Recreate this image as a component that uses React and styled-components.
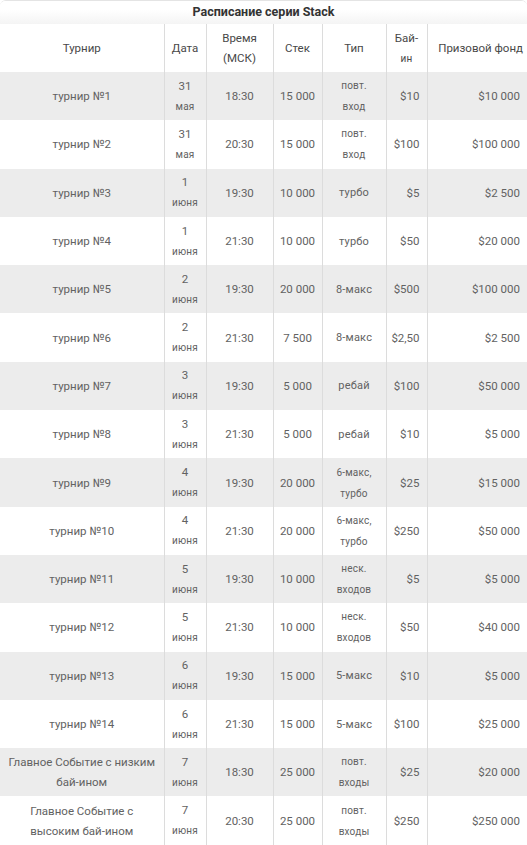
import styled, { createGlobalStyle } from 'styled-components';

const GlobalStyle = createGlobalStyle`
	body {
		margin: 0;
		background: #fff;
		font-family: Roboto, "Liberation Sans", sans-serif;
	}
`;

const COLS = [164, 42, 67, 49, 64, 41, 100];

const ROWS = [
	['турнир №1', '31', 'мая', '18:30', '15 000', ['повт.', 'вход'], '$10', '$10 000'],
	['турнир №2', '31', 'мая', '20:30', '15 000', ['повт.', 'вход'], '$100', '$100 000'],
	['турнир №3', '1', 'июня', '19:30', '10 000', ['турбо'], '$5', '$2 500'],
	['турнир №4', '1', 'июня', '21:30', '10 000', ['турбо'], '$50', '$20 000'],
	['турнир №5', '2', 'июня', '19:30', '20 000', ['8-макс'], '$500', '$100 000'],
	['турнир №6', '2', 'июня', '21:30', '7 500', ['8-макс'], '$2,50', '$2 500'],
	['турнир №7', '3', 'июня', '19:30', '5 000', ['ребай'], '$100', '$50 000'],
	['турнир №8', '3', 'июня', '21:30', '5 000', ['ребай'], '$10', '$5 000'],
	['турнир №9', '4', 'июня', '19:30', '20 000', ['6-макс,', 'турбо'], '$25', '$15 000'],
	['турнир №10', '4', 'июня', '21:30', '20 000', ['6-макс,', 'турбо'], '$250', '$50 000'],
	['турнир №11', '5', 'июня', '19:30', '10 000', ['неск.', 'входов'], '$5', '$5 000'],
	['турнир №12', '5', 'июня', '21:30', '10 000', ['неск.', 'входов'], '$50', '$40 000'],
	['турнир №13', '6', 'июня', '19:30', '15 000', ['5-макс'], '$10', '$5 000'],
	['турнир №14', '6', 'июня', '21:30', '15 000', ['5-макс'], '$100', '$25 000'],
	['Главное Событие с низким бай-ином', '7', 'июня', '18:30', '25 000', ['повт.', 'входы'], '$25', '$20 000'],
	['Главное Событие с высоким бай-ином', '7', 'июня', '20:30', '25 000', ['повт.', 'входы'], '$250', '$250 000'],
];

const Wrapper = styled.div`
	width: 527px;
	overflow: hidden;
	border-radius: 6px 6px 0 0;
	border-top: 1px solid #e4e4e4;
	box-sizing: border-box;
`;

const Title = styled.div`
	height: 23px;
	line-height: 22px;
	text-align: center;
	font-size: 12.5px;
	font-weight: 700;
	color: #333;
	background: linear-gradient(#fff 40%, #f4f4f4);
`;

const Table = styled.table`
	width: 527px;
	table-layout: fixed;
	border-collapse: collapse;
	font-size: 11.5px;
	color: #626262;
`;

const Row = styled.tr`
	height: 48.3px;
	background: ${({ $shaded }) => ($shaded ? '#ececec' : '#fff')};
`;

const HeadRow = styled.tr`
	height: 48px;
	background: #fff;
`;

const Th = styled.th`
	font-weight: 400;
	color: #484848;
	font-size: 11.5px;
	line-height: 20px;
	padding: 0 4px;
	text-align: ${({ $align }) => $align || 'center'};
	border-left: 1px solid #dcdcdc;
	&:first-child {
		border-left: none;
	}
`;

const Td = styled.td`
	line-height: 20px;
	padding: ${({ $align }) => ($align === 'right' ? '0 7px 0 2px' : '0 4px')};
	text-align: ${({ $align }) => $align || 'center'};
	vertical-align: middle;
	border-left: 1px solid #dcdcdc;
	white-space: ${({ $nowrap }) => ($nowrap ? 'nowrap' : 'normal')};
	&:first-child {
		border-left: none;
		padding: 0 7px;
	}
`;

const Small = styled.span`
	font-size: ${({ $size }) => $size || '10px'};
	letter-spacing: 0.2px;
`;

const TypeCell = ({ lines }) =>
	lines.length > 1 ? (
		<>
			<Small>{lines[0]}</Small>
			<br />
			<Small>{lines[1]}</Small>
		</>
	) : (
		<Small $size="11px">{lines[0]}</Small>
	);

export default function App() {
	return (
		<>
			<GlobalStyle />
			<Wrapper>
				<Title>Расписание серии Stack</Title>
				<Table>
					<colgroup>
						{COLS.map((w, i) => (
							<col key={i} style={{ width: w }} />
						))}
					</colgroup>
					<thead>
						<HeadRow>
							<Th>Турнир</Th>
							<Th>Дата</Th>
							<Th>
								Время
								<br />
								(МСК)
							</Th>
							<Th>Стек</Th>
							<Th>Тип</Th>
							<Th>
								Бай-
								<br />
								<Small>ин</Small>
							</Th>
							<Th $align="right">Призовой фонд</Th>
						</HeadRow>
					</thead>
					<tbody>
						{ROWS.map(([name, day, month, time, stack, type, buyIn, prize], i) => (
							<Row key={name} $shaded={i % 2 === 0}>
								<Td>{name}</Td>
								<Td>
									{day}
									<br />
									<Small>{month}</Small>
								</Td>
								<Td>{time}</Td>
								<Td $nowrap>{stack}</Td>
								<Td>
									<TypeCell lines={type} />
								</Td>
								<Td $align="right" $nowrap>
									{buyIn}
								</Td>
								<Td $align="right">{prize}</Td>
							</Row>
						))}
					</tbody>
				</Table>
			</Wrapper>
		</>
	);
}
